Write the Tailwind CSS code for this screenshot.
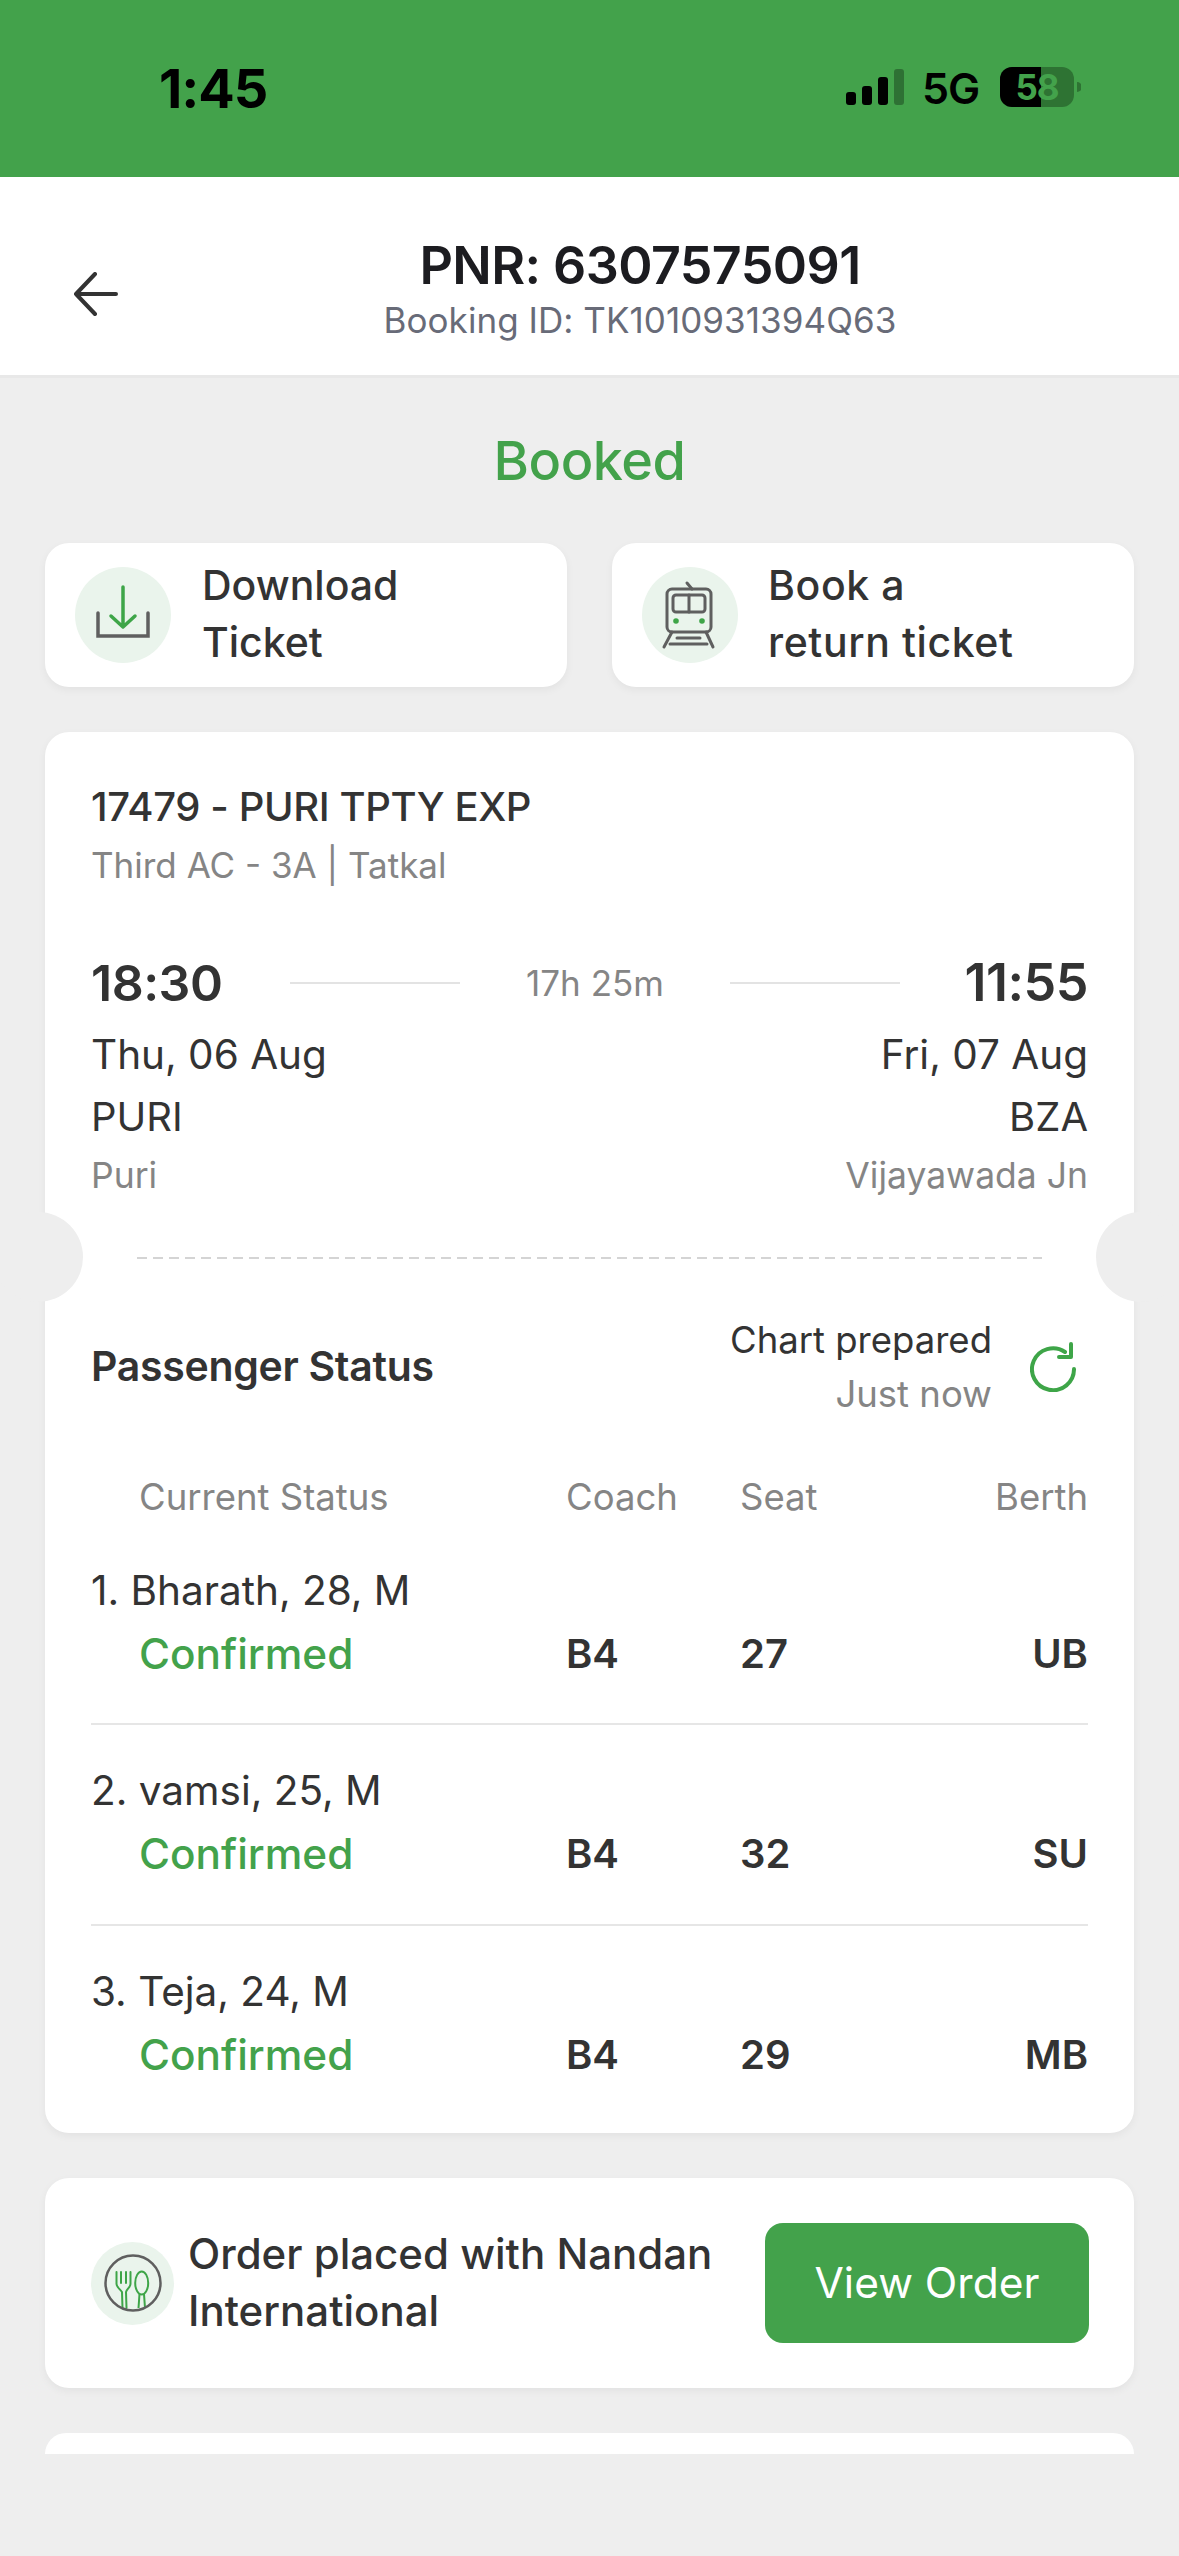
<!doctype html>
<html><head><meta charset="utf-8"><script src="https://cdn.jsdelivr.net/npm/@tailwindcss/browser@4"></script></head>
<body class="bg-[#eeeeee]">
<div class="w-[1179px] h-[2556px] bg-[#eeeeee] font-['Inter',sans-serif] text-[#333333] overflow-hidden">
  <div class="h-[177px] bg-[#43a24b] flex items-start justify-between pl-[159px] pr-[98px]">
    <div class="mt-[59px] h-[58px] flex items-center text-[54px] font-bold text-black tracking-[-1px]">1:45</div>
    <div class="flex items-center mt-[67px] h-[40px]">
      <svg width="58" height="36" viewBox="0 0 58 36" class="mr-[18px]"><rect x="0" y="23" width="10" height="13" rx="3"/><rect x="16" y="17" width="10" height="19" rx="3"/><rect x="32" y="8" width="10" height="28" rx="3"/><rect x="48" y="0" width="10" height="36" rx="3" fill="#000" opacity=".3"/></svg>
      <span class="text-[43px] font-semibold text-black w-[78px] tracking-[-1px] mt-[3px]">5G</span>
      <div class="relative w-[74px] h-[40px] rounded-[12px] bg-[#2e7333] overflow-hidden">
        <div class="absolute left-0 top-0 w-[41px] h-[40px] bg-black"></div>
        <div class="absolute inset-0 flex items-center justify-center text-[35px] font-bold text-[#43a24b] tracking-[-1px]">58</div>
      </div>
      <svg width="4" height="10" viewBox="0 0 4 10" class="ml-[3px]"><path d="M0 0a5 5 0 0 1 0 10z" fill="#2e7333"/></svg>
    </div>
  </div>
  <header class="relative h-[201px] bg-white border-b-[3px] border-[#e8e8e8] flex flex-col items-center pl-[101px]">
    <svg class="absolute left-[73px] top-[95px]" width="46" height="44" viewBox="0 0 46 44" fill="none" stroke="#333" stroke-width="4" stroke-linecap="round" stroke-linejoin="round"><path d="M43 22H3M22 2 3 22l19 20"/></svg>
    <div class="mt-[58px] h-[62px] flex items-center text-[52px] font-semibold text-[#1c1c20] tracking-[-0.6px]">PNR: 6307575091</div>
    <div class="h-[46px] flex items-center text-[35px] text-[#686b78] tracking-[0.05px]">Booking ID: TK1010931394Q63</div>
  </header>
  <div class="h-[165px] flex items-center justify-center text-[54px] font-medium text-[#43a24b] -tracking-[0.5px]">Booked</div>
  <section class="px-[45px] flex gap-[45px]">
    <div class="flex-1 h-[144px] bg-white rounded-[24px] shadow-[0_3px_8px_rgba(0,0,0,0.05)] flex items-center pl-[30px]">
      <div class="w-[96px] h-[96px] rounded-full bg-[#eaf4ec] flex items-center justify-center shrink-0">
        <svg width="60" height="60" viewBox="0 0 60 60" fill="none"><path d="M5 28V51H55V28" stroke="#5f5f5f" stroke-width="3.5" stroke-linecap="round"/><path d="M30 2V41M18 31L30 42L42 31" stroke="#3ea548" stroke-width="3.5" stroke-linecap="round" stroke-linejoin="round"/></svg>
      </div>
      <div class="ml-[31px] -mt-[3px] text-[41px] leading-[57px] font-medium">Download<br>Ticket</div>
    </div>
    <div class="flex-1 h-[144px] bg-white rounded-[24px] shadow-[0_3px_8px_rgba(0,0,0,0.05)] flex items-center pl-[30px]">
      <div class="w-[96px] h-[96px] rounded-full bg-[#eaf4ec] flex items-center justify-center shrink-0">
        <svg width="60" height="70" viewBox="0 0 60 70" fill="none" stroke="#5f5f5f" stroke-width="3" stroke-linecap="round" stroke-linejoin="round"><path d="M27 3l5 6"/><rect x="7" y="9" width="44" height="43" rx="5"/><rect x="13" y="15" width="32" height="17" rx="3"/><path d="M29 15v17M12 52 4 67M46 52l7 15M17 58h23M10 64h37"/><circle cx="16" cy="41" r="2.8" fill="#3ea548" stroke="none"/><circle cx="42" cy="41" r="2.8" fill="#3ea548" stroke="none"/></svg>
      </div>
      <div class="ml-[30px] -mt-[3px] text-[41px] leading-[57px] font-medium tracking-[0.6px]">Book a<br>return ticket</div>
    </div>
  </section>
  <section class="relative mx-[45px] mt-[45px] h-[1401px] bg-white rounded-[24px] shadow-[0_3px_8px_rgba(0,0,0,0.05)] px-[46px] pt-[47px]">
    <div class="absolute left-[-52px] top-[480px] w-[90px] h-[90px] rounded-full bg-[#eeeeee]"></div>
    <div class="absolute right-[-52px] top-[480px] w-[90px] h-[90px] rounded-full bg-[#eeeeee]"></div>
    <div class="h-[56px] flex items-center text-[40px] font-medium -tracking-[0.4px]">17479 - PURI TPTY EXP</div>
    <div class="h-[60px] flex items-center text-[35px] text-[#858585]">Third AC - 3A | Tatkal</div>
    <div class="h-[118px] flex items-center justify-between mt-[29px]">
      <span class="w-[199px] text-[50px] font-semibold text-[#333] -tracking-[0.5px]">18:30</span>
      <span class="w-[170px] h-[2px] bg-[#e3e3e3]"></span>
      <span class="w-[270px] text-center text-[35px] text-[#858585]">17h 25m</span>
      <span class="w-[170px] h-[2px] bg-[#e3e3e3]"></span>
      <span class="w-[188px] text-right text-[52px] font-semibold -tracking-[0.5px]">11:55</span>
    </div>
    <div class="h-[62px] -mt-[18px] flex items-center justify-between text-[40.5px]"><span>Thu, 06 Aug</span><span>Fri, 07 Aug</span></div>
    <div class="h-[62px] flex items-center justify-between text-[40px]"><span>PURI</span><span>BZA</span></div>
    <div class="h-[56px] flex items-center justify-between text-[35.5px] text-[#858585]"><span>Puri</span><span>Vijayawada Jn</span></div>
    <div class="mx-[46px] mt-[53px] h-[2px] bg-[repeating-linear-gradient(90deg,#d4d4d4_0_10px,transparent_10px_16px)]"></div>
    <div class="flex items-center h-[200px] mt-[8px]">
      <div class="flex-1 text-[41px] font-semibold -tracking-[0.3px]">Passenger Status</div>
      <div class="text-right">
        <div class="text-[36.5px] leading-[54px]">Chart prepared</div>
        <div class="text-[36.5px] leading-[54px] text-[#858585]">Just now</div>
      </div>
      <svg class="ml-[38px] mr-[12px]" width="46" height="50" viewBox="0 0 46 50" fill="none" stroke="#3ea548" stroke-width="4" stroke-linecap="round" stroke-linejoin="round"><path d="M44 27A21 21 0 1 1 35 10"/><path d="M41 2v13H29"/></svg>
    </div>
    <div class="grid grid-cols-[427px_174px_1fr_100px] pl-[48px] h-[60px] items-center text-[36.5px] text-[#858585]">
      <span>Current Status</span><span>Coach</span><span>Seat</span><span class="text-right">Berth</span>
    </div>
    <div class="mt-[33px] h-[165px] border-b-[2px] border-[#e6e6e6]">
      <div class="h-[62px] flex items-center text-[40.5px]">1. Bharath, 28, M</div>
      <div class="grid grid-cols-[427px_174px_1fr_100px] pl-[48px] h-[62px] items-center text-[40px] font-semibold"><span class="text-[#43a24b] font-medium text-[42.3px]">Confirmed</span><span>B4</span><span>27</span><span class="text-right">UB</span></div>
    </div>
    <div class="mt-[36px] h-[165px] border-b-[2px] border-[#e6e6e6]">
      <div class="h-[61px] flex items-center text-[40.5px]">2. vamsi, 25, M</div>
      <div class="grid grid-cols-[427px_174px_1fr_100px] pl-[48px] h-[62px] items-center text-[40px] font-semibold"><span class="text-[#43a24b] font-medium text-[42.3px]">Confirmed</span><span>B4</span><span>32</span><span class="text-right">SU</span></div>
    </div>
    <div class="mt-[35px]">
      <div class="h-[62px] flex items-center text-[40.5px]">3. Teja, 24, M</div>
      <div class="grid grid-cols-[427px_174px_1fr_100px] pl-[48px] h-[62px] items-center text-[40px] font-semibold"><span class="text-[#43a24b] font-medium text-[42.3px]">Confirmed</span><span>B4</span><span>29</span><span class="text-right">MB</span></div>
    </div>
  </section>
  <section class="mx-[45px] mt-[45px] h-[210px] bg-white rounded-[24px] shadow-[0_3px_8px_rgba(0,0,0,0.05)] flex items-center pl-[46px] pr-[45px]">
    <div class="w-[83px] h-[83px] rounded-full bg-[#eaf4ec] flex items-center justify-center shrink-0">
      <svg width="58" height="58" viewBox="0 0 58 58" fill="none"><path d="M12.5 18v12c0 3 3.500 5 5.500 8l.5 16M17 18v11M22 18v11M26.500 18v12c0 3-3.500 5-4.500 8l.5 16" stroke="#3ea548" stroke-width="2" stroke-linejoin="round" stroke-linecap="round"/><ellipse cx="37.700" cy="29" rx="6.500" ry="11.500" stroke="#3ea548" stroke-width="2"/><path d="M35.500 40l-1 14M40 40l1 14" stroke="#3ea548" stroke-width="2"/><circle cx="29" cy="29" r="27.500" stroke="#5f5f5f" stroke-width="2.500"/></svg>
    </div>
    <div class="ml-[14px] -mt-[3px] flex-1 text-[42px] leading-[57px] font-medium">Order placed with Nandan<br>International</div>
    <div class="w-[324px] h-[120px] rounded-[18px] bg-[#43a24b] text-white text-[42.5px] flex items-center justify-center">View Order</div>
  </section>
  <div class="mx-[45px] mt-[45px] h-[21px] bg-white rounded-t-[24px]"></div>
</div>
</body></html>
